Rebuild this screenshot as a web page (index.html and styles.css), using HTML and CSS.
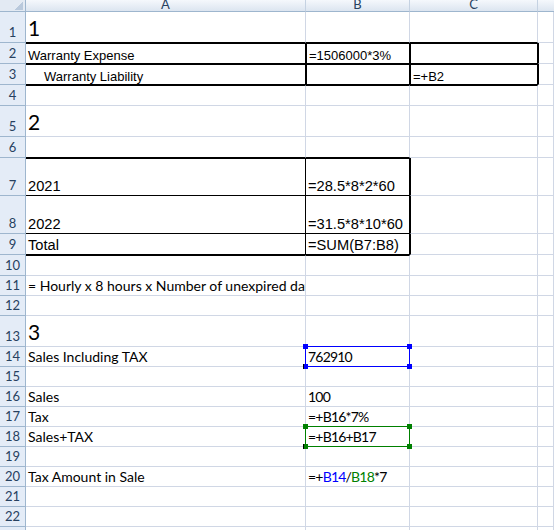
FILE: index.html
```html
<!DOCTYPE html>
<html lang="en">
<head>
  <meta charset="UTF-8" />
  <title>Book1 - Sheet1</title>
  <link rel="stylesheet" href="styles.css">
</head>
<body>
  <div class="sheet">
    <div class="row head">
      <div class="corner"></div>
      <div class="colhead">A</div>
      <div class="colhead">B</div>
      <div class="colhead">C</div>
      <div class="colhead"></div>
    </div>

    <!-- 1 -->
    <div class="row h31">
      <div class="rh">1</div>
      <div class="c big bb">1</div>
      <div class="c bb"></div>
      <div class="c bb"></div>
      <div class="c"></div>
    </div>
    <div class="row h21 arial">
      <div class="rh">2</div>
      <div class="c bt bb br">Warranty Expense</div>
      <div class="c bt bb bl br">=1506000*3%</div>
      <div class="c bt bb bl br"></div>
      <div class="c bl"></div>
    </div>
    <div class="row h21 arial">
      <div class="rh">3</div>
      <div class="c bt bb br indent">Warranty Liability</div>
      <div class="c bt bb bl br"></div>
      <div class="c bt bb bl br">=+B2</div>
      <div class="c bl"></div>
    </div>
    <div class="row h21">
      <div class="rh">4</div>
      <div class="c bt"></div>
      <div class="c bt"></div>
      <div class="c bt"></div>
      <div class="c"></div>
    </div>

    <!-- 2 -->
    <div class="row h31">
      <div class="rh">5</div>
      <div class="c big">2</div>
      <div class="c"></div>
      <div class="c"></div>
      <div class="c"></div>
    </div>
    <div class="row h21">
      <div class="rh">6</div>
      <div class="c bb"></div>
      <div class="c bb"></div>
      <div class="c"></div>
      <div class="c"></div>
    </div>
    <div class="row h38 arial lg">
      <div class="rh">7</div>
      <div class="c bt bb br">2021</div>
      <div class="c bt bb br">=28.5*8*2*60</div>
      <div class="c bl"></div>
      <div class="c"></div>
    </div>
    <div class="row h38 arial lg">
      <div class="rh">8</div>
      <div class="c bb br">2022</div>
      <div class="c bb br">=31.5*8*10*60</div>
      <div class="c bl"></div>
      <div class="c"></div>
    </div>
    <div class="row h21 arial lg">
      <div class="rh">9</div>
      <div class="c bb br">Total</div>
      <div class="c bb br">=SUM(B7:B8)</div>
      <div class="c bl"></div>
      <div class="c"></div>
    </div>
    <div class="row h21">
      <div class="rh">10</div>
      <div class="c bt"></div>
      <div class="c bt"></div>
      <div class="c"></div>
      <div class="c"></div>
    </div>
    <div class="row h20">
      <div class="rh">11</div>
      <div class="c">= Hourly x 8 hours x Number of unexpired days</div>
      <div class="c"></div>
      <div class="c"></div>
      <div class="c"></div>
    </div>
    <div class="row h20">
      <div class="rh">12</div>
      <div class="c"></div>
      <div class="c"></div>
      <div class="c"></div>
      <div class="c"></div>
    </div>

    <!-- 3 -->
    <div class="row h31">
      <div class="rh">13</div>
      <div class="c big">3</div>
      <div class="c"></div>
      <div class="c"></div>
      <div class="c"></div>
    </div>
    <div class="row h20">
      <div class="rh">14</div>
      <div class="c">Sales Including TAX</div>
      <div class="c num picked">762910
        <span class="sel blue"><i class="tl"></i><i class="tr"></i><i class="bl"></i><i class="br"></i></span>
      </div>
      <div class="c"></div>
      <div class="c"></div>
    </div>
    <div class="row h20">
      <div class="rh">15</div>
      <div class="c"></div>
      <div class="c"></div>
      <div class="c"></div>
      <div class="c"></div>
    </div>
    <div class="row h20">
      <div class="rh">16</div>
      <div class="c">Sales</div>
      <div class="c num">100</div>
      <div class="c"></div>
      <div class="c"></div>
    </div>
    <div class="row h20">
      <div class="rh">17</div>
      <div class="c">Tax</div>
      <div class="c num">=+B16*7%</div>
      <div class="c"></div>
      <div class="c"></div>
    </div>
    <div class="row h20">
      <div class="rh">18</div>
      <div class="c">Sales+TAX</div>
      <div class="c num picked">=+B16+B17
        <span class="sel green"><i class="tl"></i><i class="tr"></i><i class="bl"></i><i class="br"></i></span>
      </div>
      <div class="c"></div>
      <div class="c"></div>
    </div>
    <div class="row h20">
      <div class="rh">19</div>
      <div class="c"></div>
      <div class="c"></div>
      <div class="c"></div>
      <div class="c"></div>
    </div>
    <div class="row h20">
      <div class="rh">20</div>
      <div class="c">Tax Amount in Sale</div>
      <div class="c num">=+<span class="ref-blue">B14</span>/<span class="ref-green">B18</span>*7</div>
      <div class="c"></div>
      <div class="c"></div>
    </div>
    <div class="row h20">
      <div class="rh">21</div>
      <div class="c"></div>
      <div class="c"></div>
      <div class="c"></div>
      <div class="c"></div>
    </div>
    <div class="row h20">
      <div class="rh">22</div>
      <div class="c"></div>
      <div class="c"></div>
      <div class="c"></div>
      <div class="c"></div>
    </div>
    <div class="row h20">
      <div class="rh">23</div>
      <div class="c"></div>
      <div class="c"></div>
      <div class="c"></div>
      <div class="c"></div>
    </div>
  </div>
</body>
</html>
```

FILE: styles.css
```css
* {
  box-sizing: border-box;
}
body {
  margin: 0;
  background: #fff;
  overflow: hidden;
  font-family: Lato, 'Noto Sans', sans-serif;
  font-size: 14px;
  color: #000;
}
.sheet {
  width: 554px;
}
.row {
  display: grid;
  grid-template-columns: 26px 280px 104px 128px 1fr;
}
.row.head { height: 12px; }
.h20 { height: 20px; }
.h21 { height: 21px; }
.h31 { height: 31px; }
.h38 { height: 38px; }

/* headers */
.corner {
  border-right: 1px solid #9eb6ce;
  border-bottom: 1px solid #9eb6ce;
  background: linear-gradient(to bottom right, transparent 50%, #b9c9dc 50%) no-repeat right 2px bottom 1px / 9px 9px, #e3eaf3;
}
.colhead {
  overflow: hidden;
  display: flex;
  align-items: flex-end;
  justify-content: center;
  font-size: 13px;
  line-height: 14px;
  color: #27415f;
  background: linear-gradient(#f5f8fc, #dce5f0);
  border-right: 1px solid #c5d2e2;
  border-bottom: 1px solid #9eb6ce;
}
.colhead:last-child { border-right: none; }
.rh {
  display: flex;
  align-items: flex-end;
  justify-content: center;
  padding-bottom: 2px;
  font-size: 13px;
  line-height: 15px;
  color: #27415f;
  background: #e4ecf7;
  border-right: 1px solid #9eb6ce;
  border-bottom: 1px solid #9eb6ce;
}

/* cells */
.c {
  position: relative;
  display: flex;
  align-items: flex-end;
  padding: 0 0 1px 2px;
  line-height: 17px;
  white-space: nowrap;
  overflow: hidden;
  border-right: 1px solid #d0d7e5;
  border-bottom: 1px solid #d0d7e5;
}
.c.picked { overflow: visible; }
.c.num { letter-spacing: -0.8px; }
.arial .c {
  font-family: 'Liberation Sans', Arial, sans-serif;
  font-size: 13px;
  line-height: 15px;
  padding-bottom: 0;
}
.arial.lg .c {
  font-size: 14.67px;
  line-height: 17px;
}
.c.indent { padding-left: 18px; }
.c.big {
  font-size: 21px;
  line-height: 25px;
  padding-bottom: 2px;
}
.bt { border-top: 1px solid #000; }
.bl { border-left: 1px solid #000; }
.bb { border-bottom-color: #000; }
.br { border-right-color: #000; }

.ref-blue { color: #0000ff; }
.ref-green { color: #008000; }

/* selection frames */
.sel {
  position: absolute;
  top: -1px;
  left: -1px;
  right: -1px;
  bottom: -1px;
  border: 1px solid;
  z-index: 2;
}
.sel.blue { border-color: #0000ff; }
.sel.green { border-color: #008000; }
.sel i {
  position: absolute;
  width: 5px;
  height: 5px;
}
.sel.blue i { background: #0000ff; }
.sel.green i { background: #008000; }
.sel .tl { top: -3px; left: -3px; }
.sel .tr { top: -3px; right: -3px; }
.sel .bl { bottom: -3px; left: -3px; }
.sel .br { bottom: -3px; right: -3px; }
```
